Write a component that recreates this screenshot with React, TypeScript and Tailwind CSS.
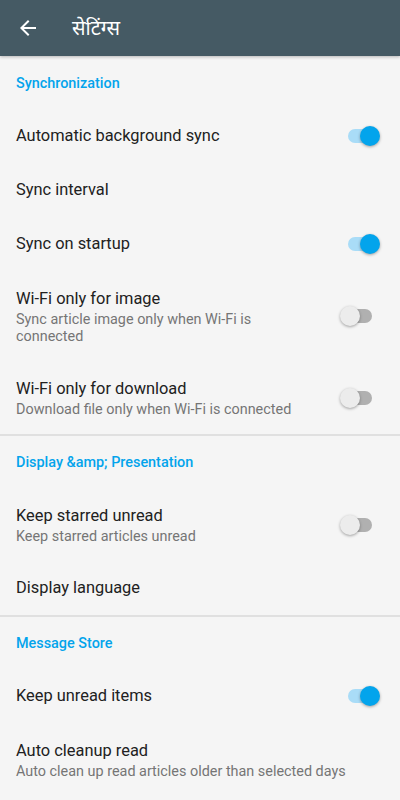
import React from "react";

type Item = {
  title: string;
  summary?: string;
  toggle?: boolean;
};

function Switch({ on }: { on: boolean }) {
  return (
    <div className="relative w-[41px] h-[20px] shrink-0 flex items-center">
      <div
        className={
          on
            ? "absolute left-[9px] right-[8px] h-[14px] rounded-full bg-[#a9dcf7]"
            : "absolute left-[9px] right-[8px] h-[14px] rounded-full bg-[#b0b0b0]"
        }
      />
      <div
        className={
          on
            ? "absolute right-0 w-[20px] h-[20px] rounded-full bg-[#03a4ec] shadow-[0_1px_3px_rgba(0,0,0,0.35)]"
            : "absolute left-[1px] w-[20px] h-[20px] rounded-full bg-[#ececec] shadow-[0_1px_3px_rgba(0,0,0,0.35)]"
        }
      />
    </div>
  );
}

function Category({ label, first }: { label: string; first?: boolean }) {
  return (
    <div
      className={
        first
          ? "px-4 pt-[18px] pb-[15px] text-[14.4px] leading-5 font-medium text-[#03a4ec]"
          : "px-4 pt-[17px] pb-[15px] text-[14.4px] leading-5 font-medium text-[#03a4ec]"
      }
    >
      {label}
    </div>
  );
}

function Row({ item }: { item: Item }) {
  return (
    <div
      className={
        item.summary
          ? "flex items-center pl-4 pr-[20px] pt-4 pb-4"
          : "flex items-center pl-4 pr-[20px] h-[54px]"
      }
    >
      <div className={item.toggle !== undefined ? "flex-1 min-w-0 pr-7" : "flex-1 min-w-0"}>
        <div className="text-[16.4px] leading-6 text-[#212121]">{item.title}</div>
        {item.summary && (
          <div className="text-[14.4px] leading-[17px] text-[#757575]">{item.summary}</div>
        )}
      </div>
      {item.toggle !== undefined && <Switch on={item.toggle} />}
    </div>
  );
}

const sync: Item[] = [
  { title: "Automatic background sync", toggle: true },
  { title: "Sync interval" },
  { title: "Sync on startup", toggle: true },
  {
    title: "Wi-Fi only for image",
    summary: "Sync article image only when Wi-Fi is connected",
    toggle: false,
  },
  {
    title: "Wi-Fi only for download",
    summary: "Download file only when Wi-Fi is connected",
    toggle: false,
  },
];

const display: Item[] = [
  { title: "Keep starred unread", summary: "Keep starred articles unread", toggle: false },
  { title: "Display language" },
];

const store: Item[] = [
  { title: "Keep unread items", toggle: true },
  { title: "Auto cleanup read", summary: "Auto clean up read articles older than selected days" },
];

export default function App() {
  return (
    <div
      className="w-[400px] h-[800px] overflow-hidden bg-[#f5f5f5] flex flex-col"
      style={{ fontFamily: "Roboto, 'Noto Sans', 'Noto Sans Devanagari', sans-serif" }}
    >
      <header className="h-[56px] shrink-0 bg-[#455a64] flex items-center px-4 shadow-[0_1px_3px_rgba(0,0,0,0.25)]">
        <svg viewBox="0 0 24 24" className="w-6 h-6 fill-white">
          <path d="M20 11H7.83l5.59-5.59L12 4l-8 8 8 8 1.41-1.41L7.83 13H20v-2z" />
        </svg>
        <h1 className="ml-8 text-[20px] text-white">सेटिंग्स</h1>
      </header>

      <section className="border-b-2 border-[#e0e0e0]">
        <Category label="Synchronization" first />
        {sync.map((item) => (
          <Row key={item.title} item={item} />
        ))}
      </section>

      <section className="border-b-2 border-[#e0e0e0]">
        <Category label={"Display &amp; Presentation"} />
        {display.map((item) => (
          <Row key={item.title} item={item} />
        ))}
      </section>

      <section>
        <Category label="Message Store" />
        {store.map((item) => (
          <Row key={item.title} item={item} />
        ))}
      </section>
    </div>
  );
}
